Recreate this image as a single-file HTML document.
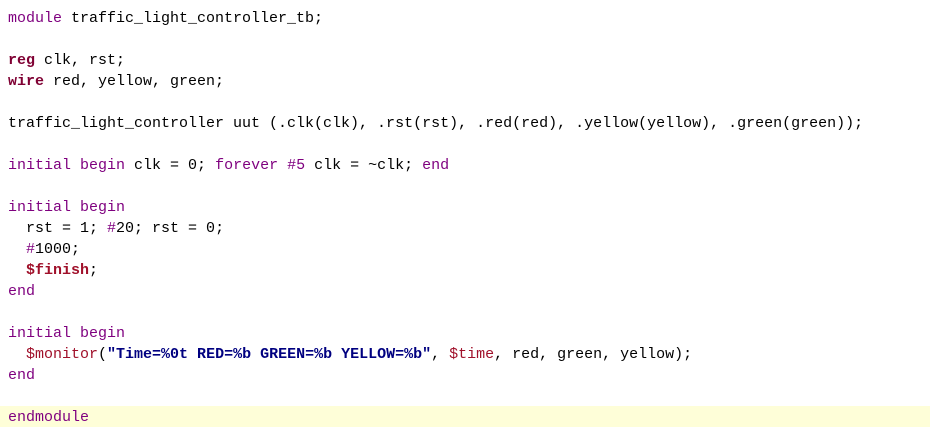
<!DOCTYPE html>
<html><head><meta charset="utf-8"><style>
html,body{margin:0;padding:0;background:#fff;width:930px;height:448px;overflow:hidden}
pre{margin:0;position:absolute;left:8px;top:8px;font-family:"Liberation Mono","Courier New",monospace;font-size:15px;line-height:21px;color:#000}
.hl{position:absolute;left:0;top:406px;width:930px;height:21px;background:#fefed8}
.k{color:#7f007f}
.r{color:#7f0033;font-weight:bold}
.s{color:#000080;font-weight:bold}
.f{color:#a0102a}
.fb{color:#a0102a;font-weight:bold}
</style></head><body>
<div class="hl"></div>
<pre><span class="k">module</span> traffic_light_controller_tb;

<span class="r">reg</span> clk, rst;
<span class="r">wire</span> red, yellow, green;

traffic_light_controller uut (.clk(clk), .rst(rst), .red(red), .yellow(yellow), .green(green));

<span class="k">initial</span> <span class="k">begin</span> clk = 0; <span class="k">forever</span> <span class="k">#5</span> clk = ~clk; <span class="k">end</span>

<span class="k">initial</span> <span class="k">begin</span>
  rst = 1; <span class="k">#</span>20; rst = 0;
  <span class="k">#</span>1000;
  <span class="fb">$finish</span>;
<span class="k">end</span>

<span class="k">initial</span> <span class="k">begin</span>
  <span class="f">$monitor</span>(<span class="s">"Time=%0t RED=%b GREEN=%b YELLOW=%b"</span>, <span class="f">$time</span>, red, green, yellow);
<span class="k">end</span>

<span class="k">endmodule</span>
</pre>
</body></html>
